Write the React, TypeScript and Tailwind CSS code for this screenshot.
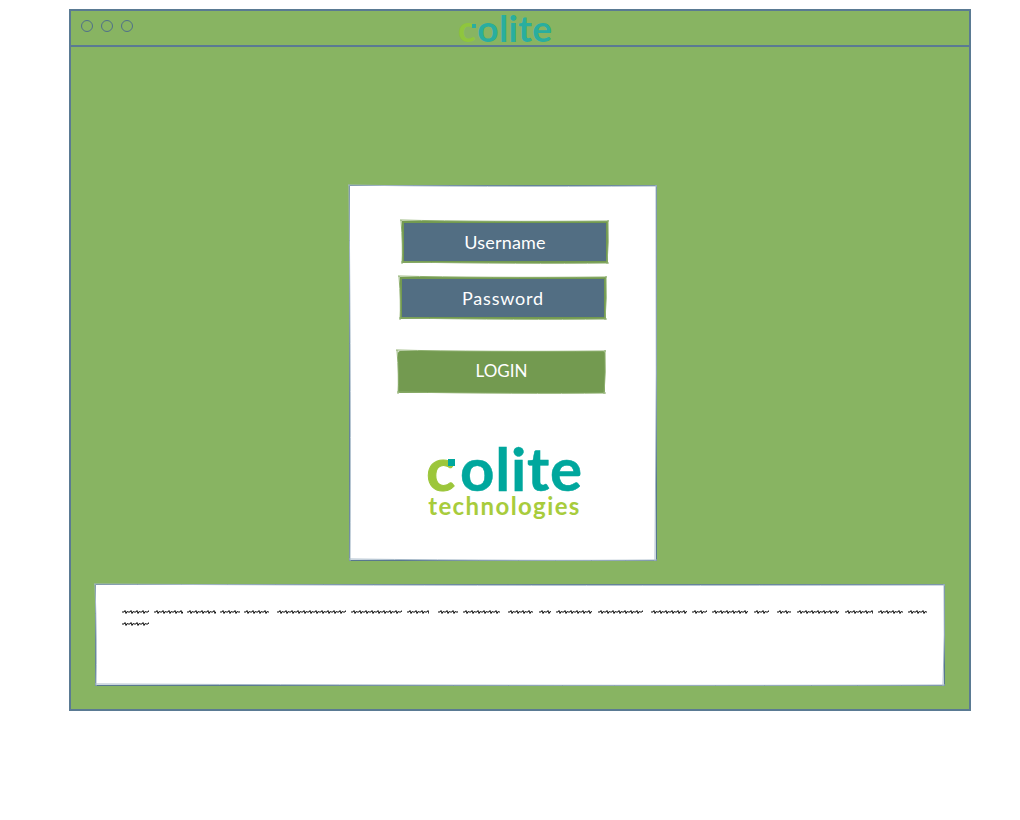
import React from 'react';

// scribbled paragraph: [gap before word, word width]
const lineOne = [
  [0, 27], [5, 29], [4, 29], [4, 20], [4, 25], [8, 69], [5, 51], [5, 22], [9, 20], [5, 37], [8, 25], [6, 12],
  [5, 36], [6, 45], [8, 36], [5, 15], [5, 36], [6, 15], [8, 14], [6, 42], [6, 28], [5, 25], [5, 19],
];
const lineTwo = [[0, 27]];

const Scribble = ({ width, gap }: { width: number; gap: number }) => {
  let d = 'M0 3';
  for (let x = 0; x < width; x += 6) {
    d += ` L${x + 2} 3 L${x + 3} 1.5 L${x + 4} 4.5 L${x + 5} 2.5 L${x + 6} 3`;
  }
  return (
    <svg width={width} height={6} viewBox={`0 0 ${width} 6`} className="shrink-0" style={{ marginLeft: gap }}>
      <path d={d} fill="none" stroke="#111" strokeWidth="1" />
    </svg>
  );
};

// loose second pass of pen lines on top of a box edge
const SketchLines = ({ w, h, color, className = 'left-0 top-0' }: { w: number; h: number; color: string; className?: string }) => (
  <svg width={w} height={h} viewBox={`0 0 ${w} ${h}`} className={`pointer-events-none absolute overflow-visible ${className}`} fill="none" stroke={color} strokeWidth="1">
    <path d={`M-2 -1 Q${w * 0.4} 1 ${w + 1} 0`} />
    <path d={`M${w} -1 Q${w + 1} ${h * 0.5} ${w - 1} ${h + 1}`} />
    <path d={`M${w + 1} ${h} Q${w * 0.6} ${h + 1} -1 ${h - 1}`} />
    <path d={`M0 ${h + 1} Q1 ${h * 0.6} -1 -1`} />
  </svg>
);

const Logo = ({ size }: { size: 'small' | 'large' }) => {
  const small = size === 'small';
  return (
    <div className="flex flex-col items-center font-['Lato',sans-serif] leading-none">
      <div className={`relative flex items-baseline font-bold ${small ? 'text-[37px] leading-[34px] tracking-[0.4px] text-[#29ae9f]' : 'text-[60px] leading-[54px] tracking-[0.8px] text-[#00a79d] [-webkit-text-stroke:0.5px_#00a79d]'}`}>
        <span className={small ? 'text-[#8fc63d]' : 'text-[#9cc63b] [-webkit-text-stroke:1px_#9cc63b]'}>c</span>
        <span className={small ? 'ml-[1px]' : 'ml-[4px]'}>olite</span>
        <span className={`absolute ${small ? 'left-[14px] top-[13px] h-[4px] w-[4px] bg-[#29ae9f]' : 'left-[22px] top-[18px] h-[7px] w-[7px] bg-[#00a79d]'}`} />
      </div>
      {!small && (
        <div className="mt-[-1px] text-[24px] font-bold leading-[24px] tracking-[1.4px] text-[#a8cc3c]">technologies</div>
      )}
    </div>
  );
};

const Field = ({ label, className }: { label: string; className: string }) => (
  <div className={`relative flex h-[42px] w-[206px] items-center justify-center border-2 border-[#739a50] bg-[#526e83] text-[18px] font-normal text-white ${className}`}>
    {label}
    <SketchLines w={206} h={42} color="#8fb070" className="-left-[2px] -top-[2px]" />
  </div>
);

export default function App() {
  return (
    <div className="h-[820px] w-[1020px] bg-white pl-[69px] pt-[9px] font-['Lato',sans-serif]">
      <div className="flex h-[702px] w-[902px] flex-col border-2 border-[#5a7a93] bg-[#88b462]">
        <header className="flex h-[36px] shrink-0 items-center border-b-2 border-[#5a7a93]">
          <div className="mb-[4px] flex items-center gap-[8px] pl-[10px]">
            <span className="h-[12px] w-[12px] rounded-full border-[1.5px] border-[#4f6f8a]" />
            <span className="h-[12px] w-[12px] rounded-full border-[1.5px] border-[#4f6f8a]" />
            <span className="h-[12px] w-[12px] rounded-full border-[1.5px] border-[#4f6f8a]" />
          </div>
          <div className="ml-[325px]">
            <Logo size="small" />
          </div>
        </header>

        <main className="flex flex-1 flex-col pt-[138px]">
          <div className="relative ml-[278px] flex h-[376px] w-[308px] flex-col border border-[#58788f] bg-white pt-[35px]">
            <SketchLines w={306} h={374} color="#a5b8c8" />
            <Field label="Username" className="ml-[52px] tracking-[0.2px]" />
            <Field label="Password" className="ml-[50px] mt-[14px] tracking-[0.8px]" />
            <button className="relative ml-[48px] mt-[32px] flex h-[42px] w-[207px] items-center justify-center rounded-[2px] bg-[#739a50] pb-[2px] text-[17px] font-normal text-white">
              LOGIN
              <SketchLines w={207} h={42} color="#8fb070" />
            </button>
            <div className="ml-[3px] mt-[48px] flex justify-center">
              <Logo size="large" />
            </div>
          </div>

          <section className="relative ml-[24px] mt-[23px] h-[102px] w-[850px] border border-[#58788f] bg-white pl-[26px] pt-[21px]">
            <SketchLines w={848} h={100} color="#a5b8c8" />
            <div className="flex h-[12px] items-center">
              {lineOne.map(([gap, w], i) => (
                <Scribble key={i} width={w} gap={gap} />
              ))}
            </div>
            <div className="flex h-[12px] items-center">
              {lineTwo.map(([gap, w], i) => (
                <Scribble key={i} width={w} gap={gap} />
              ))}
            </div>
          </section>
        </main>
      </div>
    </div>
  );
}
